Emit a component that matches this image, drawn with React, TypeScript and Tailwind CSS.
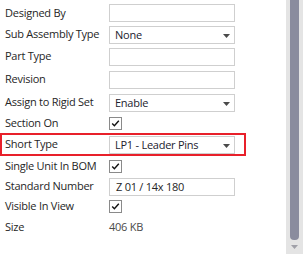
import React from 'react';

const font = { fontFamily: '"Open Sans", "Noto Sans", Arial, sans-serif' };

const Arrow = () => (
  <svg width="7" height="4" viewBox="0 0 7 4" className="absolute right-[4px] top-[7px]">
    <path d="M0 0H7L3.5 4Z" fill="#4a4a4a" />
  </svg>
);

const TextBox = ({ value = '' }: { value?: string }) => (
  <div className="h-[18px] w-[126px] border border-[#cfcfcf] bg-white pl-[6px] text-[11px] leading-[16px] tracking-[-0.25px] text-[#262626]">
    {value}
  </div>
);

const Select = ({ value }: { value: string }) => (
  <div className="relative h-[18px] w-[126px] border border-[#cfcfcf] bg-white pl-[5px] text-[11px] leading-[16px] tracking-[-0.25px] text-[#22222e]">
    {value}
    <Arrow />
  </div>
);

const Check = () => (
  <div className="flex h-[13px] w-[13px] items-center justify-center border border-[#8a8a8a] bg-white">
    <svg width="9" height="9" viewBox="0 0 9 9">
      <path d="M1.2 4.6L3.4 6.8L7.8 1.8" fill="none" stroke="#111" strokeWidth="1.4" />
    </svg>
  </div>
);

const Row = ({ label, h, children }: { label: string; h: string; children: React.ReactNode }) => (
  <div className={`flex items-center ${h}`}>
    <div className="w-[109px] pl-[5px] text-[11px] tracking-[-0.25px] text-[#262626]">{label}</div>
    {children}
  </div>
);

export default function App() {
  return (
    <div className="flex h-[254px] w-[303px] bg-white" style={font}>
      <div className="flex-1 pt-[2px]">
        <Row label="Designed By" h="h-[22px]"><TextBox /></Row>
        <Row label="Sub Assembly Type" h="h-[21px]"><Select value="None" /></Row>
        <Row label="Part Type" h="h-[23px]"><TextBox /></Row>
        <Row label="Revision" h="h-[23px]"><TextBox /></Row>
        <Row label="Assign to Rigid Set" h="h-[23px]"><Select value="Enable" /></Row>
        <Row label="Section On" h="h-[19px]"><Check /></Row>
        <div className="flex h-[23px] w-[246px] items-center border-2 border-[#e8202a]">
          <div className="w-[107px] pl-[3px] text-[11px] tracking-[-0.25px] text-[#262626]">Short Type</div>
          <Select value="LP1 - Leader Pins" />
        </div>
        <Row label="Single Unit In BOM" h="h-[21px]"><Check /></Row>
        <Row label="Standard Number" h="h-[19px]"><TextBox value="Z 01 / 14x 180" /></Row>
        <Row label="Visible In View" h="h-[21px]"><Check /></Row>
        <Row label="Size" h="h-[21px]">
          <span className="text-[11px] tracking-[-0.25px] text-[#4a4a4a]">406 KB</span>
        </Row>
      </div>
      <div className="flex w-[17px] flex-col bg-[#e4e4e4]">
        <div className="ml-[4px] h-[240px] w-[9px] rounded-b-[4px] bg-[#8a8c9e]" />
        <div className="flex flex-1 items-center justify-center">
          <svg width="7" height="4" viewBox="0 0 7 4">
            <path d="M0 0H7L3.5 4Z" fill="#a0a0a8" />
          </svg>
        </div>
      </div>
    </div>
  );
}
